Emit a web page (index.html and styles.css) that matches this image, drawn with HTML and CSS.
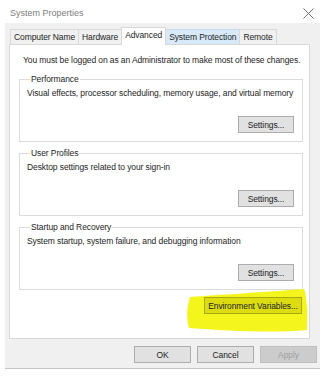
FILE: index.html
```html
<!DOCTYPE html>
<html lang="en">
<head>
    <meta charset="UTF-8">
    <title>System Properties</title>
    <link rel="stylesheet" href="styles.css">
</head>
<body>
    <div class="titlebar">
        <span class="title">System Properties</span>
        <svg class="close" width="11" height="11" viewBox="0 0 11 11">
            <path d="M0.5 0.5 L10.5 10.5 M10.5 0.5 L0.5 10.5" stroke="#6e6e6e" stroke-width="1" fill="none"/>
        </svg>
    </div>

    <div class="dialog">
        <div class="tabs">
            <div class="tab">Computer Name</div>
            <div class="tab">Hardware</div>
            <div class="tab active">Advanced</div>
            <div class="tab hover">System Protection</div>
            <div class="tab">Remote</div>
        </div>

        <div class="panel">
            <p class="note">You must be logged on as an Administrator to make most of these changes.</p>

            <fieldset class="group">
                <legend>Performance</legend>
                <p>Visual effects, processor scheduling, memory usage, and virtual memory</p>
                <div class="group-actions"><button class="btn">Settings...</button></div>
            </fieldset>

            <fieldset class="group">
                <legend>User Profiles</legend>
                <p>Desktop settings related to your sign-in</p>
                <div class="group-actions"><button class="btn">Settings...</button></div>
            </fieldset>

            <fieldset class="group">
                <legend>Startup and Recovery</legend>
                <p>System startup, system failure, and debugging information</p>
                <div class="group-actions"><button class="btn">Settings...</button></div>
            </fieldset>

            <div class="env-row">
                <svg class="marker" width="124" height="46" viewBox="0 0 124 46">
                    <path d="M4 9 C30 7 80 4 118 1 C121 8 122 30 121 42 C90 45 40 43 3 40 C0 30 1 18 4 9 Z" fill="#f5f51e"/>
                </svg>
                <button class="btn env">Environment Variables...</button>
            </div>
        </div>

        <div class="actions">
            <button class="btn">OK</button>
            <button class="btn">Cancel</button>
            <button class="btn" disabled>Apply</button>
        </div>
    </div>
</body>
</html>
```

FILE: styles.css
```css
body {
    margin: 0;
    background-color: #fff;
    font-family: "Liberation Sans", Arial, sans-serif;
    font-size: 8.5px;
    letter-spacing: -0.1px;
    color: #1e1e1e;
}
p {
    margin: 0;
    line-height: 10px;
}
.titlebar {
    height: 23px;
    display: flex;
    align-items: center;
    justify-content: space-between;
    padding: 3px 9px 0 10px;
    box-sizing: border-box;
}
.title {
    color: #7d7d7d;
    font-size: 9px;
    letter-spacing: 0;
}
.dialog {
    margin-left: 5px;
    width: 315px;
    height: 346px;
    box-sizing: border-box;
    background-color: #f0f0f0;
    border-bottom: 1px solid #c4c4c4;
}
.tabs {
    display: flex;
    align-items: flex-end;
    height: 21px;
    padding-left: 5px;
}
.tab {
    height: 15px;
    line-height: 14px;
    padding: 0 3px;
    box-sizing: border-box;
    border: 1px solid #d9d9d9;
    border-bottom: none;
    margin-right: -1px;
    background-color: #f0f0f0;
}
.tab.hover {
    background-color: #d8eaf9;
    border-color: #c5dcf1;
}
.tab.active {
    height: 18px;
    line-height: 15px;
    background-color: #fff;
    margin-bottom: -1px;
    position: relative;
    z-index: 1;
}
.panel {
    margin-left: 4px;
    width: 301px;
    height: 295px;
    box-sizing: border-box;
    background-color: #fff;
    border: 1px solid #d9d9d9;
    padding: 10px 6px 0 9px;
}
.note {
    margin-left: 4px;
    margin-bottom: 9px;
    white-space: nowrap;
}
.group {
    margin: 0 0 6px 0;
    padding: 4px 8px 8px 7px;
    border: 1px solid #dcdcdc;
    height: 68px;
    box-sizing: border-box;
}
.group legend {
    padding: 0 1px;
    margin-left: 3px;
    line-height: 10px;
}
.group-actions {
    display: flex;
    justify-content: flex-end;
    margin-top: 18px;
}
.btn {
    font-family: inherit;
    font-size: 8.5px;
    letter-spacing: -0.1px;
    color: #1e1e1e;
    background-color: #e1e1e1;
    border: 1px solid #adadad;
    height: 17px;
    padding: 0;
    margin: 0;
    width: 56px;
}
.btn:disabled {
    background-color: #cccccc;
    border-color: #bfbfbf;
    color: #a0a0a0;
}
.env-row {
    position: relative;
    display: flex;
    justify-content: flex-end;
    margin-top: 7px;
    padding-right: 1px;
}
.marker {
    position: absolute;
    right: -7px;
    top: -9px;
}
.btn.env {
    position: relative;
    width: 98px;
    background-color: #dcdc10;
    border-color: #a8a810;
}
.actions {
    display: flex;
    justify-content: flex-end;
    gap: 6px;
    padding: 7px 3px 0 0;
}
.actions .btn {
    width: 57px;
}
```
